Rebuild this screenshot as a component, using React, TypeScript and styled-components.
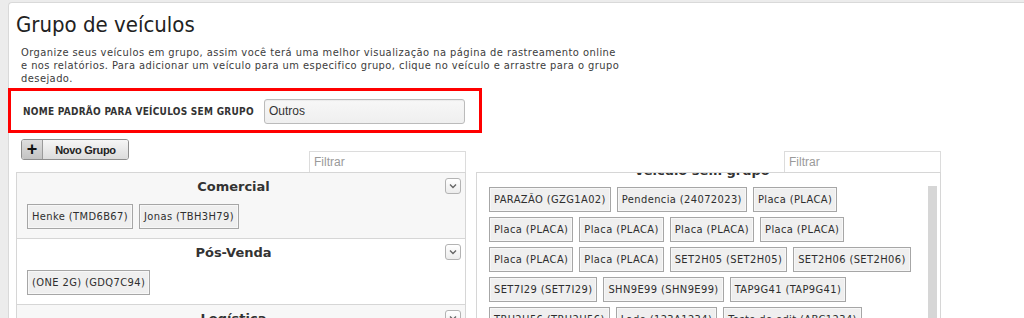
import React from 'react'
import styled, { createGlobalStyle } from 'styled-components'

// (1) 型
type Group = { name: string; vehicles: string[] }

const groups: Group[] = [
  { name: 'Comercial', vehicles: ['Henke (TMD6B67)', 'Jonas (TBH3H79)'] },
  { name: 'Pós-Venda', vehicles: ['(ONE 2G) (GDQ7C94)'] },
  { name: 'Logística', vehicles: ['Logística (LOG1234)'] },
]

const semGrupo = [
  'PARAZÃO (GZG1A02)',
  'Pendencia (24072023)',
  'Placa (PLACA)',
  'Placa (PLACA)',
  'Placa (PLACA)',
  'Placa (PLACA)',
  'Placa (PLACA)',
  'Placa (PLACA)',
  'Placa (PLACA)',
  'SET2H05 (SET2H05)',
  'SET2H06 (SET2H06)',
  'SET7I29 (SET7I29)',
  'SHN9E99 (SHN9E99)',
  'TAP9G41 (TAP9G41)',
  'TRU2H56 (TRU2H56)',
  'Lado (123A1234)',
  'Teste de edit (ABC1234)',
]

// (2) Style
const GlobalStyle = createGlobalStyle`
  html, body {
    margin: 0;
    background: #ececec;
    overflow: hidden;
  }
  body {
    font-family: "DejaVu Sans Condensed", "DejaVu Sans", Verdana, sans-serif;
    font-stretch: condensed;
    color: #333;
  }
`

const Page = styled.div`
  padding: 2px 0 0 8px;
  height: 316px;
  overflow: hidden;
`

const Panel = styled.div`
  background: #fff;
  border: 1px solid #d9d9d9;
  border-right: none;
  border-radius: 4px 0 0 0;
  height: 400px;
`

const Title = styled.h1`
  margin: 9px 0 0 7px;
  font-size: 22px;
  line-height: 26px;
  font-weight: normal;
  color: #222;
`

const Description = styled.p`
  margin: 8px 0 0 12px;
  width: 600px;
  font-size: 11px;
  line-height: 13px;
  letter-spacing: 0.45px;
  color: #3c3c3c;
`

const DefaultNameBox = styled.div`
  box-sizing: border-box;
  margin: 3px 0 0 -1px;
  width: 474px;
  height: 45px;
  border: 3px solid #f00;
  display: flex;
  align-items: center;
  padding: 1px 0 0 12px;
  gap: 10px;
`

const Label = styled.span`
  width: 231px;
  font-size: 10px;
  font-weight: bold;
  color: #333;
  white-space: nowrap;
  letter-spacing: 0.27px;
`

const TextInput = styled.div`
  box-sizing: border-box;
  width: 201px;
  height: 25px;
  border: 1px solid #bbb;
  border-radius: 3px;
  background: linear-gradient(#f7f7f7, #efefef);
  box-shadow: inset 0 1px 1px rgba(0, 0, 0, 0.05);
  font-family: "Liberation Sans", Arial, sans-serif;
  font-stretch: normal;
  font-size: 12px;
  color: #333;
  display: flex;
  align-items: center;
  padding-left: 4px;
`

const Columns = styled.div`
  display: flex;
  gap: 10px;
  margin: 6px 0 0 7px;
`

const Column = styled.div<{ $width: number }>`
  width: ${p => p.$width}px;
  display: flex;
  flex-direction: column;
`

const ColumnHead = styled.div`
  height: 33px;
  display: flex;
  justify-content: space-between;
`

const AddButton = styled.div`
  margin-left: 5px;
  height: 21px;
  box-sizing: border-box;
  display: flex;
  border: 1px solid #8e8e8e;
  border-radius: 3px;
  overflow: hidden;
  font-family: "Liberation Sans", Arial, sans-serif;
  font-stretch: normal;
  font-weight: bold;
  color: #222;
`

const AddIcon = styled.span`
  width: 21px;
  display: flex;
  align-items: center;
  justify-content: center;
  background: linear-gradient(#dedede, #c3c3c3);
  border-right: 1px solid #9a9a9a;
  font-size: 18px;
  line-height: 1;
  padding-bottom: 2px;
  box-sizing: border-box;
  color: #111;
`

const AddLabel = styled.span`
  width: 85px;
  display: flex;
  align-items: center;
  justify-content: center;
  background: linear-gradient(#f6f6f6, #dcdcdc);
  font-size: 11px;
  letter-spacing: -0.3px;
`

const Filter = styled.div`
  margin-left: auto;
  align-self: flex-end;
  box-sizing: border-box;
  width: 157px;
  height: 21px;
  border: 1px solid #dcdcdc;
  border-bottom: none;
  background: #fff;
  font-family: "Liberation Sans", Arial, sans-serif;
  font-stretch: normal;
  font-size: 12px;
  color: #9a9a9a;
  padding: 3px 0 0 4px;
`

const GroupsBox = styled.div`
  border: 1px solid #d6d6d6;
  height: 200px;
  overflow: hidden;
`

const GroupSection = styled.div<{ $shaded: boolean }>`
  background: ${p => (p.$shaded ? '#f7f7f7' : '#fff')};
  border-bottom: 1px solid #d6d6d6;
  padding: 4px 4px 9px 10px;
`

const GroupHead = styled.div`
  height: 18px;
  display: flex;
  align-items: center;
  gap: 5px;
`

const GroupName = styled.div`
  flex: 1;
  text-align: center;
  font-family: "DejaVu Sans", Verdana, sans-serif;
  font-stretch: normal;
  font-size: 13px;
  font-weight: bold;
  color: #333;
`

const Toggle = styled.div`
  width: 16px;
  height: 16px;
  box-sizing: border-box;
  border: 1px solid #b3b3b3;
  border-radius: 3px;
  background: linear-gradient(#fff, #ececec);
  display: flex;
  align-items: center;
  justify-content: center;
`

const Chips = styled.div<{ $top: number }>`
  margin-top: ${p => p.$top}px;
  display: flex;
  flex-wrap: wrap;
  gap: 5px 6px;
`

const Chip = styled.div`
  box-sizing: border-box;
  height: 25px;
  padding: 0 4px;
  border: 1px solid #a6a6a6;
  box-shadow: inset 0 0 0 1px #f7f7f7;
  background: #efefef;
  display: flex;
  align-items: center;
  font-size: 11px;
  letter-spacing: 0.4px;
  color: #2e2e2e;
  white-space: nowrap;
`

const FreeBox = styled.div`
  border: 1px solid #d6d6d6;
  height: 200px;
  overflow: hidden;
  display: flex;
`

const FreeContent = styled.div`
  flex: 1;
  padding: 0 13px 0 12px;
`

const FreeTitle = styled.div`
  margin-top: -10px;
  text-align: center;
  font-family: "DejaVu Sans", Verdana, sans-serif;
  font-stretch: normal;
  font-size: 13px;
  font-weight: bold;
  line-height: 16px;
  color: #333;
`

const ScrollThumb = styled.div`
  width: 9px;
  margin: 13px 3px 0 0;
  background: #d6d6d6;
`

// (3) DOM
const Chevron: React.FC = () => (
  <svg width="10" height="10" viewBox="0 0 10 10">
    <path d="M2 3.5 L5 6.5 L8 3.5" fill="none" stroke="#666" strokeWidth="1.4" />
  </svg>
)

const App: React.FC = () => (
  <>
    <GlobalStyle />
    <Page>
      <Panel>
        <Title>Grupo de veículos</Title>
        <Description>
          Organize seus veículos em grupo, assim você terá uma melhor visualização na página de rastreamento online
          e nos relatórios. Para adicionar um veículo para um especifico grupo, clique no veículo e arrastre para o grupo
          desejado.
        </Description>
        <DefaultNameBox>
          <Label>NOME PADRÃO PARA VEÍCULOS SEM GRUPO</Label>
          <TextInput>Outros</TextInput>
        </DefaultNameBox>
        <Columns>
          <Column $width={450}>
            <ColumnHead>
              <AddButton>
                <AddIcon>+</AddIcon>
                <AddLabel>Novo Grupo</AddLabel>
              </AddButton>
              <Filter>Filtrar</Filter>
            </ColumnHead>
            <GroupsBox>
              {groups.map((g, i) => (
                <GroupSection key={g.name} $shaded={i % 2 === 0}>
                  <GroupHead>
                    <GroupName>{g.name}</GroupName>
                    <Toggle>
                      <Chevron />
                    </Toggle>
                  </GroupHead>
                  <Chips $top={9}>
                    {g.vehicles.map(v => (
                      <Chip key={v}>{v}</Chip>
                    ))}
                  </Chips>
                </GroupSection>
              ))}
            </GroupsBox>
          </Column>
          <Column $width={465}>
            <ColumnHead>
              <Filter>Filtrar</Filter>
            </ColumnHead>
            <FreeBox>
              <FreeContent>
                <FreeTitle>Veículo sem grupo</FreeTitle>
                <Chips $top={8}>
                  {semGrupo.map((v, i) => (
                    <Chip key={i}>{v}</Chip>
                  ))}
                </Chips>
              </FreeContent>
              <ScrollThumb />
            </FreeBox>
          </Column>
        </Columns>
      </Panel>
    </Page>
  </>
)

export default App
